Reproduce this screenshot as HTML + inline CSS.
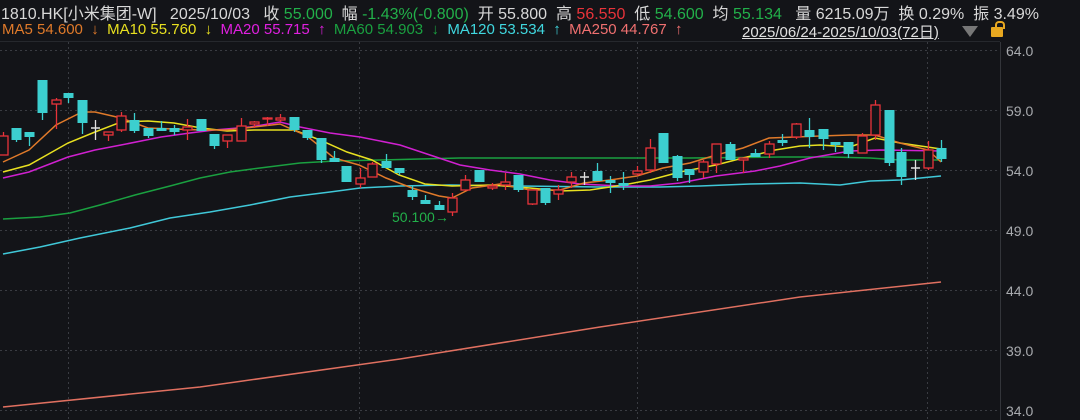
<!DOCTYPE html>
<html><head><meta charset="utf-8"><style>
html,body{margin:0;padding:0;background:#131418;}
body{width:1080px;height:420px;overflow:hidden;position:relative;font-family:"Liberation Sans","Noto Sans CJK SC",sans-serif;}
.r1{position:absolute;left:1px;top:0px;font-size:16px;color:#d8d8d8;white-space:nowrap;}
.r2{position:absolute;left:2px;top:21px;font-size:15px;white-space:nowrap;}
.g{color:#22b04a}.rd{color:#e8333a}
</style></head><body>
<svg width="1080" height="420" style="position:absolute;left:0;top:0">
<g stroke="#3a3c42" stroke-dasharray="2,3" stroke-width="1">
<line x1="0" y1="50.5" x2="1000" y2="50.5"/><line x1="0" y1="110.5" x2="1000" y2="110.5"/><line x1="0" y1="170.5" x2="1000" y2="170.5"/><line x1="0" y1="230.5" x2="1000" y2="230.5"/><line x1="0" y1="290.5" x2="1000" y2="290.5"/><line x1="0" y1="350.5" x2="1000" y2="350.5"/><line x1="0" y1="410.5" x2="1000" y2="410.5"/>
<line x1="68.5" y1="42" x2="68.5" y2="420"/><line x1="359.5" y1="42" x2="359.5" y2="420"/><line x1="637.5" y1="42" x2="637.5" y2="420"/><line x1="927.5" y1="42" x2="927.5" y2="420"/>
</g>
<line x1="1000.5" y1="42" x2="1000.5" y2="420" stroke="#33353a"/>
<line x1="0" y1="41.5" x2="1000" y2="41.5" stroke="#26282d"/>
<g font-size="14" fill="#a8aaae"><text x="1006" y="56">64.0</text><text x="1006" y="116">59.0</text><text x="1006" y="176">54.0</text><text x="1006" y="236">49.0</text><text x="1006" y="296">44.0</text><text x="1006" y="356">39.0</text><text x="1006" y="416">34.0</text></g>
<g fill="none" stroke-width="1.5">
<polyline stroke="#e07060" points="3,407 200,387 400,359 600,327 800,297 941,282"/>
<polyline stroke="#40c8d8" points="3,254 40,247 80,238 130,228 170,218 210,212 250,205 290,197 330,192 360,188 400,186 450,185 520,186 600,187 660,187 700,186 750,184 800,183 840,185 870,181 900,180 941,176"/>
<polyline stroke="#1aa040" points="3,219 40,217 70,213 100,205 135,195 170,186 200,178 230,172 260,168 300,163 335,161 380,160 420,159 460,158 560,158 690,158 780,157 830,157 870,158 900,160 941,160"/>
<polyline stroke="#d020d0" points="3,178 29,172 68,157 95,150 121,145 161,137 190,133 214,130 250,127 280,122 300,127 330,133 360,137 400,145 430,155 460,165 490,170 520,174 550,180 580,184 620,186 650,186 680,183 716,176 755,171 780,166 810,158 850,151 880,150 941,151"/>
<polyline stroke="#e8e020" points="3,172 29,165 68,143 95,132 121,122 148,121 174,123 201,128 227,131 254,130 294,130 320,140 347,152 372,160 399,175 425,184 452,186 492,185 530,188 560,191 590,190 623,185 650,180 680,172 716,165 743,158 775,150 800,146 820,145 850,147 875,138 900,143 941,149"/>
<polyline stroke="#e07a2a" points="3,162 29,150 56,125 82,112 95,112 121,118 148,128 174,129 201,130 227,130 254,127 280,124 307,136 334,158 359,165 386,178 412,188 439,196 452,198 472,188 500,184 530,190 560,190 584,183 610,180 637,176 663,168 690,163 716,155 743,148 769,138 796,137 820,136 850,135 875,135 900,143 928,150 941,162"/>
</g>
<g id="c"></g>
<text x="392" y="222" font-size="14" fill="#22b04a">50.100→</text>
</svg>
<div class="r1">1810.HK[小米集团-W] &nbsp; 2025/10/03 &nbsp; 收 <span class="g">55.000</span> &nbsp;幅 <span class="g">-1.43%(-0.800)</span> &nbsp;开 55.800 &nbsp;高 <span class="rd">56.550</span> &nbsp;低 <span class="g">54.600</span> &nbsp;均 <span class="g">55.134</span> &nbsp; 量 6215.09万 &nbsp;换 0.29% &nbsp;振 3.49%</div>
<div class="r2"><span style="color:#e07a2a">MA5 54.600 &nbsp;↓</span> &nbsp;<span style="color:#e8e020">MA10 55.760 &nbsp;↓</span> &nbsp;<span style="color:#e020e0">MA20 55.715 &nbsp;↑</span> &nbsp;<span style="color:#1aa040">MA60 54.903 &nbsp;↓</span> &nbsp;<span style="color:#40d8e0">MA120 53.534 &nbsp;↑</span> &nbsp;<span style="color:#f07070">MA250 44.767 &nbsp;↑</span></div>
<div style="position:absolute;left:742px;top:21px;font-size:15px;color:#e0e0e0;text-decoration:underline;">2025/06/24-2025/10/03(72日)</div>
<div style="position:absolute;left:962px;top:26px;width:0;height:0;border-left:8px solid transparent;border-right:8px solid transparent;border-top:11px solid #777;"></div>
<div style="position:absolute;left:991px;top:27px;width:12px;height:10px;background:#e8a820;border-radius:1px;"></div>
<div style="position:absolute;left:995px;top:21px;width:6px;height:6px;border:2px solid #e8a820;border-bottom:none;border-radius:4px 4px 0 0;"></div>
<script>
var d=[[3,'r',136,155,132,155],[16,'c',128,140,128,142],[29,'c',132,137,132,146],[42,'c',80,113,80,120],[56,'r',100,104,98,129],[68,'c',93,98,93,103],[82,'c',100,123,100,134],[95,'w',128,129,120,140],[108,'r',132,135,132,141],[121,'r',116,130,112,132],[134,'c',120,131,113,133],[148,'c',128,136,128,138],[161,'c',128,131,121,131],[174,'c',128,132,125,135],[187,'r',127,130,119,140],[201,'c',119,131,119,131],[214,'c',134,146,134,149],[227,'r',135,141,135,148],[241,'r',126,141,118,141],[254,'r',122,124,121,128],[267,'r',118,119,117,126],[280,'r',118,120,114,122],[294,'c',117,130,117,132],[307,'c',130,138,130,140],[321,'c',138,160,138,163],[334,'c',158,162,151,162],[346,'c',166,182,166,182],[360,'r',178,184,168,188],[372,'r',164,177,162,177],[386,'c',161,168,154,168],[399,'c',168,173,168,175],[412,'c',190,197,185,200],[425,'c',200,204,195,204],[439,'c',205,210,201,210],[452,'r',198,212,193,216],[465,'r',180,190,175,190],[479,'c',170,182,170,182],[492,'r',186,188,183,190],[505,'r',182,185,173,190],[518,'c',175,190,175,192],[532,'r',190,204,190,205],[545,'c',188,203,188,205],[558,'r',190,194,185,200],[571,'r',177,182,172,188],[584,'w',177,178,172,185],[597,'c',171,181,163,181],[610,'c',180,183,176,193],[623,'c',183,186,172,190],[637,'r',171,174,166,176],[650,'r',148,170,139,173],[663,'c',133,163,133,163],[677,'c',156,178,155,181],[689,'c',169,175,169,183],[703,'r',162,172,160,178],[716,'r',144,164,144,173],[730,'c',144,160,142,160],[743,'r',158,160,158,173],[755,'c',153,157,149,157],[769,'r',144,154,141,158],[782,'c',140,143,134,146],[796,'r',124,137,123,139],[809,'c',130,137,118,148],[823,'c',129,139,129,150],[835,'c',142,145,142,152],[848,'c',142,154,142,158],[862,'r',136,153,133,153],[875,'r',105,135,100,140],[889,'c',110,163,110,166],[901,'c',152,177,148,185],[915,'w',168,169,160,180],[928,'r',150,168,141,170],[941,'c',148,159,140,162]];
var s='';d.forEach(function(a){var x=a[0],col=a[1]=='r'?'#e8333a':a[1]=='c'?'#3ccfcf':'#e0e0e0';
s+='<line x1="'+(x+.5)+'" y1="'+a[4]+'" x2="'+(x+.5)+'" y2="'+a[5]+'" stroke="'+col+'" stroke-width="1.3"/>';
if(a[1]=='w')s+='<line x1="'+(x-4)+'" y1="'+a[2]+'" x2="'+(x+5)+'" y2="'+a[2]+'" stroke="'+col+'" stroke-width="1.5"/>';
else if(a[1]=='r')s+='<rect x="'+(x-4)+'" y="'+a[2]+'" width="9" height="'+Math.max(1,a[3]-a[2])+'" fill="#131418" stroke="'+col+'" stroke-width="1.3"/>';
else s+='<rect x="'+(x-4.5)+'" y="'+a[2]+'" width="10" height="'+Math.max(1,a[3]-a[2])+'" fill="'+col+'"/>';});
document.getElementById('c').innerHTML=s;
</script>
</body></html>
